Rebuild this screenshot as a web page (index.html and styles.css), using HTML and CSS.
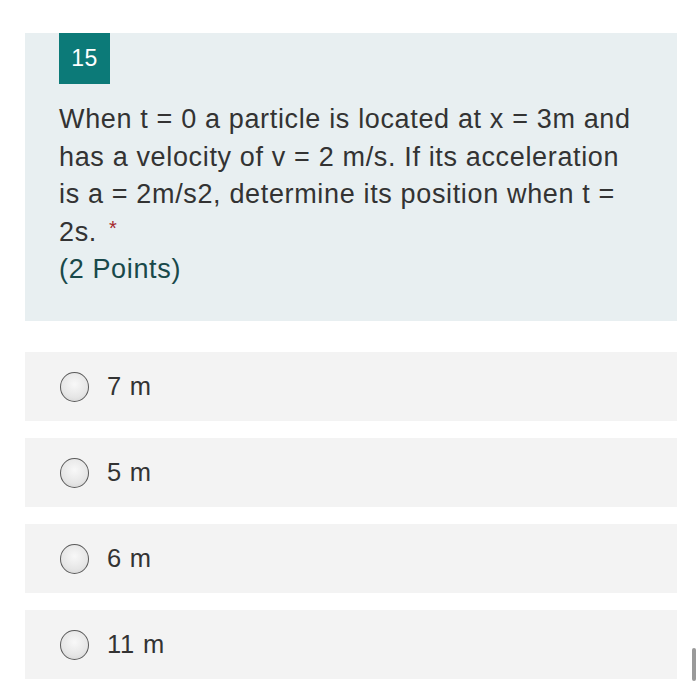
FILE: index.html
```html
<!DOCTYPE html>
<html>
<head>
<meta charset="utf-8">
<link rel="stylesheet" href="styles.css">
</head>
<body>
<div class="page">
  <section class="question">
    <div class="badge">15</div>
    <div class="qtext">When t = 0 a particle is located at x = 3m and has a velocity of v = 2 m/s. If its acceleration is a = 2m/s2, determine its position when t = 2s.<span class="req">*</span></div>
    <div class="points">(2 Points)</div>
  </section>
  <div class="options">
    <label class="option"><span class="radio"></span><span class="otext">7 m</span></label>
    <label class="option"><span class="radio"></span><span class="otext">5 m</span></label>
    <label class="option"><span class="radio"></span><span class="otext">6 m</span></label>
    <label class="option"><span class="radio"></span><span class="otext">11 m</span></label>
  </div>
  <div class="scrollbar"></div>
</div>
</body>
</html>
```

FILE: styles.css
```css
html, body {
  margin: 0;
  padding: 0;
  background: #ffffff;
}
body {
  font-family: "Liberation Sans", Arial, sans-serif;
  color: #333333;
}
.page {
  position: relative;
  width: 700px;
  height: 692px;
  padding: 33px 23px 0 25px;
  box-sizing: border-box;
}
.question {
  background: #e8eff1;
  padding: 0 30px 0 34px;
  height: 288px;
  box-sizing: border-box;
}
.badge {
  display: inline-flex;
  align-items: center;
  justify-content: center;
  width: 51px;
  height: 51px;
  background: #0c7a78;
  color: #ffffff;
  font-size: 23px;
  letter-spacing: 0.5px;
}
.qtext {
  margin-top: 17px;
  font-size: 27px;
  line-height: 37.5px;
  letter-spacing: 0.65px;
  color: #333333;
}
.req {
  display: inline-block;
  color: #a4262c;
  font-size: 20px;
  line-height: 1;
  letter-spacing: 0;
  margin-left: 12px;
  vertical-align: 6px;
}
.points {
  font-size: 27px;
  line-height: 37.5px;
  letter-spacing: 0.65px;
  color: #19494a;
}
.options {
  display: flex;
  flex-direction: column;
  gap: 17px;
  margin-top: 31px;
}
.option {
  display: flex;
  align-items: center;
  height: 69px;
  background: #f3f3f3;
  padding-left: 35px;
}
.radio {
  border-radius: 50%;
  border: 1.5px solid #5a5a5a;
  background: radial-gradient(circle at 50% 40%, #f8f8f8 0%, #e6e6e6 60%, #cfcfcf 100%);
  box-sizing: border-box;
  flex: none;
  width: 29px;
  height: 30px;
}
.otext {
  margin-left: 18px;
  font-size: 25.5px;
  letter-spacing: 0.8px;
  color: #333333;
}
.scrollbar {
  position: absolute;
  left: 692px;
  top: 648px;
  width: 4px;
  height: 33px;
  background: #9a9a9a;
  border-radius: 2px;
}
```
